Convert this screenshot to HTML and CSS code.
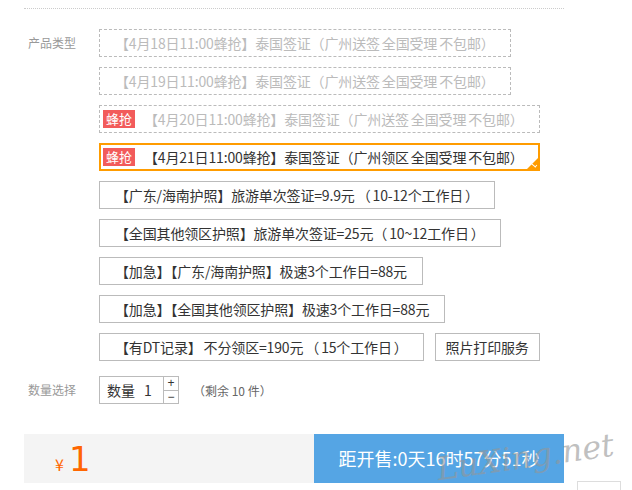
FILE: index.html
```html
<!DOCTYPE html>
<html lang="zh-CN">
  <head>
    <meta charset="UTF-8" />
    <meta name="viewport" content="width=device-width, initial-scale=1.0" />
    <title>泰国签证</title>
    <link rel="stylesheet" href="styles.css">
  </head>
  <body>
    <div class="panel">
      <div class="divider"></div>

      <div class="field">
        <div class="field-label">产品类型</div>
        <div class="options">
          <span class="opt disabled">【4月18日11:00蜂抢】泰国签证（广州送签 全国受理 不包邮）</span>
          <span class="opt disabled">【4月19日11:00蜂抢】泰国签证（广州送签 全国受理 不包邮）</span>
          <span class="opt disabled tagged"><em class="tag">蜂抢</em>【4月20日11:00蜂抢】泰国签证（广州送签 全国受理 不包邮）</span>
          <span class="opt selected tagged"><em class="tag">蜂抢</em>【4月21日11:00蜂抢】泰国签证（广州领区 全国受理 不包邮）</span>
          <span class="opt">【广东/海南护照】旅游单次签证=9.9元 （ 10-12个工作日 ）</span>
          <span class="opt">【全国其他领区护照】旅游单次签证=25元（ 10~12工作日 ）</span>
          <span class="opt">【加急】【广东/海南护照】极速3个工作日=88元</span>
          <span class="opt">【加急】【全国其他领区护照】极速3个工作日=88元</span>
          <span class="opt">【有DT记录】 不分领区=190元 （ 15个工作日 ）</span>
          <span class="opt plain">照片打印服务</span>
        </div>
      </div>

      <div class="field qty-field">
        <div class="field-label">数量选择</div>
        <div class="qty">
          <span class="qty-text">数量</span>
          <span class="qty-num">1</span>
          <span class="qty-btns">
            <span class="qty-btn">+</span>
            <span class="qty-btn">−</span>
          </span>
        </div>
        <span class="stock">（剩余 10 件）</span>
      </div>

      <div class="buy">
        <div class="price"><span class="yen">¥</span><span class="amount">1</span></div>
        <div class="countdown">距开售:0天16时57分51秒</div>
        <div class="side"></div>
        <span class="watermark">LuXing.net</span>
      </div>
    </div>
  </body>
</html>
```

FILE: styles.css
```css
body {
  margin: 0;
  padding: 0;
  background: #fff;
  color: #333;
  font-family: "Microsoft YaHei", "Noto Sans CJK SC", sans-serif;
}

.panel {
  width: 540px;
  margin-left: 24px;
  padding-top: 8px;
}

.divider {
  border-top: 1px dotted #ccc;
  margin-bottom: 20px;
}

.field {
  display: flex;
  align-items: flex-start;
}

.field-label {
  width: 71px;
  padding-left: 4px;
  line-height: 28px;
  font-size: 12px;
  color: #999;
  flex-shrink: 0;
}

.options {
  flex: 1;
  display: flex;
  flex-wrap: wrap;
  align-items: flex-start;
  gap: 10px 11px;
}

.opt {
  position: relative;
  display: inline-block;
  height: 26px;
  line-height: 26px;
  padding: 0 15px;
  border: 1px solid #bbb;
  font-size: 14px;
  letter-spacing: -0.15px;
  word-spacing: -1px;
  color: #333;
  white-space: nowrap;
}
.opt.plain {
  padding: 0 10px;
}
.opt.disabled {
  border-style: dashed;
  color: #bbb;
}
.opt.tagged {
  padding-left: 3px;
}
.opt.selected {
  height: 24px;
  line-height: 24px;
  border: 2px solid #ff9c00;
  padding-left: 2px;
  padding-right: 14px;
}
.opt.selected::after {
  content: "";
  position: absolute;
  right: 0;
  bottom: 0;
  border-style: solid;
  border-width: 0 0 11px 11px;
  border-color: transparent transparent #ff9c00 transparent;
}
.opt.selected::before {
  content: "";
  position: absolute;
  right: 1px;
  bottom: 3px;
  width: 5px;
  height: 2px;
  border-right: 1px solid #fff;
  border-bottom: 1px solid #fff;
  transform: rotate(40deg);
  z-index: 1;
}

.tag {
  display: inline-block;
  font-style: normal;
  background: #f25b5b;
  color: #fff;
  font-size: 13px;
  line-height: 18px;
  letter-spacing: 0;
  padding: 0 3px;
  margin-right: 9px;
  vertical-align: 1px;
}

.qty-field {
  margin-top: 15px;
  align-items: center;
}

.qty {
  display: flex;
  align-items: stretch;
  width: 78px;
  height: 26px;
  border: 1px solid #bbb;
  font-size: 14px;
}
.qty-text {
  padding-left: 7px;
  line-height: 26px;
}
.qty-num {
  flex: 1;
  padding-left: 9px;
  line-height: 26px;
}
.qty-btns {
  display: flex;
  flex-direction: column;
  width: 14px;
  border-left: 1px solid #bbb;
}
.qty-btn {
  flex: 1;
  text-align: center;
  font-size: 12px;
  line-height: 12px;
  color: #333;
  font-family: "Liberation Sans", sans-serif;
}
.qty-btn + .qty-btn {
  border-top: 1px solid #bbb;
}

.stock {
  margin-left: 14px;
  font-size: 12px;
  color: #666;
}

.buy {
  position: relative;
  display: flex;
  width: 597px;
  margin-top: 30px;
}
.price {
  width: 259px;
  height: 49px;
  padding-left: 31px;
  background: #f4f4f4;
  color: #ff6600;
  display: flex;
  align-items: baseline;
}
.yen {
  font-size: 16px;
  line-height: 49px;
  padding-top: 6px;
  margin-right: 5px;
}
.amount {
  font-family: "DejaVu Sans", sans-serif;
  font-size: 34px;
  line-height: 49px;
}
.countdown {
  width: 250px;
  height: 49px;
  line-height: 49px;
  background: #55a5e4;
  color: #fff;
  font-size: 18px;
  text-align: center;
}
.side {
  width: 42px;
  height: 30px;
  margin: 47px 0 0 13px;
  border: 1px solid #ddd;
}
.watermark {
  position: absolute;
  left: 412px;
  top: 4px;
  font-family: "DejaVu Serif", serif;
  font-style: italic;
  font-size: 32px;
  color: rgba(150, 150, 150, 0.6);
  transform: rotate(-8deg);
  pointer-events: none;
}
```
